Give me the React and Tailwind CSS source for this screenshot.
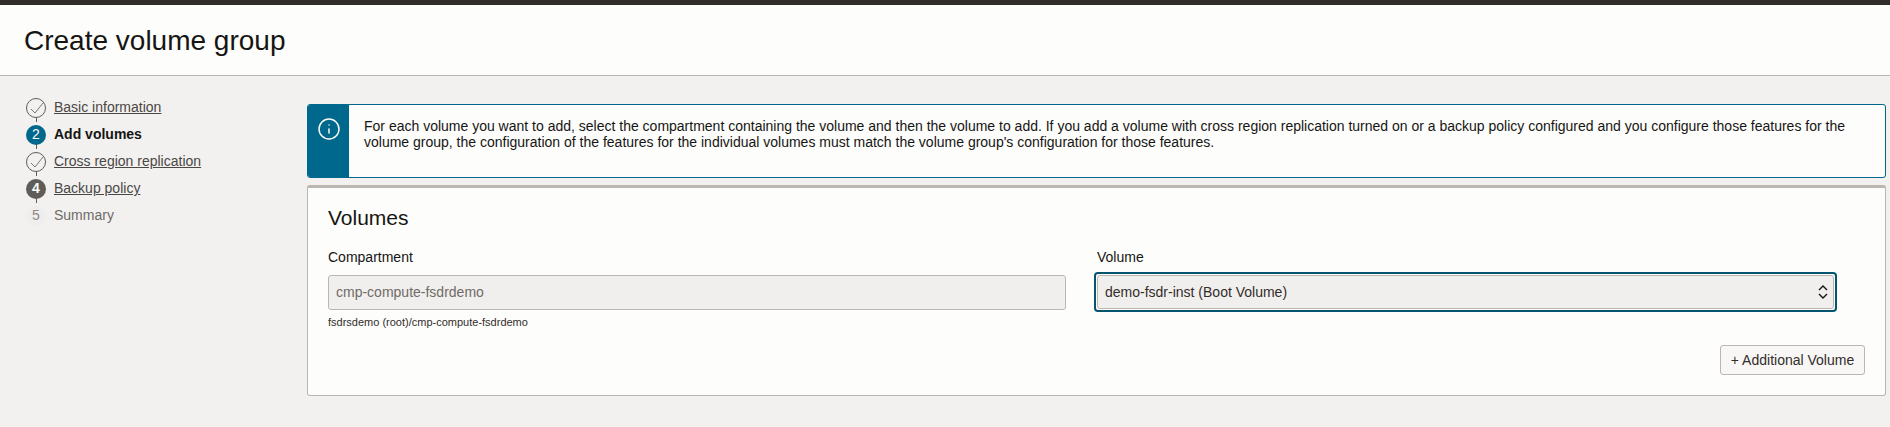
import { Info } from "lucide-react";

const steps = [
  { label: "Basic information", state: "done" },
  { label: "Add volumes", state: "current", num: 2 },
  { label: "Cross region replication", state: "done" },
  { label: "Backup policy", state: "visited", num: 4 },
  { label: "Summary", state: "todo", num: 5 },
];

function StepIcon({ step }) {
  if (step.state === "done") {
    return (
      <span className="w-5 h-5 rounded-full border border-[#5f5c59] bg-[#f2f1f0] flex items-center justify-center z-10">
        <svg viewBox="1 1 18 18" className="w-[18px] h-[18px]" fill="none" stroke="#7a7673" strokeWidth="1">
          <path d="M5 11 L9 15 L17 5" />
        </svg>
      </span>
    );
  }
  if (step.state === "current") {
    return <span className="w-5 h-5 rounded-full bg-[#00688c] text-[#fcfbfa] text-[14px] flex items-center justify-center z-10">{step.num}</span>;
  }
  if (step.state === "visited") {
    return <span className="w-5 h-5 rounded-full bg-[#5f5c59] text-[#fcfbfa] text-[14px] font-bold flex items-center justify-center z-10">{step.num}</span>;
  }
  return <span className="w-5 h-5 rounded-full bg-[#efeeec] text-[#8d8985] text-[14px] flex items-center justify-center z-10">{step.num}</span>;
}

function Stepper() {
  return (
    <ul className="w-[307px] shrink-0 pl-[26px] pt-[18px]">
      {steps.map((step, i) => (
        <li key={step.label} className="relative h-[27px] flex items-center gap-2 text-[14px]">
          {i < steps.length - 1 && <span className="absolute left-[9.5px] top-[20px] w-px h-[8px] bg-[#5f5c59]" />}
          <StepIcon step={step} />
          {step.state === "current" && <span className="font-bold text-[#161513]">{step.label}</span>}
          {step.state === "todo" && <span className="text-[#6f6b67]">{step.label}</span>}
          {(step.state === "done" || step.state === "visited") && (
            <a href="#" className="underline text-[#4a4744]">{step.label}</a>
          )}
        </li>
      ))}
    </ul>
  );
}

export default function App() {
  return (
    <div className="w-[1890px] h-[427px] overflow-hidden bg-[#f2f1f0] text-[#161513] font-['Liberation_Sans',Arial,sans-serif]">
      <div className="h-[5px] bg-[#312d2a]" />
      <header className="h-[71px] bg-[#fdfdfb] border-b border-[#bcb6b1] pl-[24px] flex items-center">
        <h1 className="text-[28px] leading-none pt-[2px]">Create volume group</h1>
      </header>
      <div className="flex">
        <Stepper />
        <main className="w-[1579px] pt-[28px]">
          <div className="h-[74px] flex rounded-[3px] border border-[#00688c] bg-[#fdfdfb] overflow-hidden">
            <div className="w-[41px] bg-[#00688c] flex justify-center pt-[12px]">
              <Info className="w-[24px] h-[24px] text-[#fcfbfa]" strokeWidth={1.5} />
            </div>
            <p className="flex-1 pl-[15px] pr-[40px] pt-[13px] text-[14px] leading-[16px] text-[#161513]">
              For each volume you want to add, select the compartment containing the volume and then the volume to add. If you add a volume with cross region replication turned on or a backup policy configured and you configure those features for the volume group, the configuration of the features for the individual volumes must match the volume group's configuration for those features.
            </p>
          </div>
          <section className="mt-[7px] h-[211px] rounded-[3px] border border-[#bcb6b1] border-t-[3px] bg-[#fdfdfb] px-[20px] pt-[18px]">
            <h2 className="text-[21px] leading-[24px]">Volumes</h2>
            <div className="flex mt-[19px]">
              <div className="w-[738px]">
                <label className="block text-[14px] leading-[16px]">Compartment</label>
                <div className="mt-[10px] h-[35px] rounded-[3px] border border-[#bcb6b1] bg-[#f1efed] px-[7px] flex items-center text-[14px] text-[#6f6b67]">
                  cmp-compute-fsdrdemo
                </div>
                <p className="mt-[6px] text-[11px] leading-[12px] text-[#312d2a]">fsdrsdemo (root)/cmp-compute-fsdrdemo</p>
              </div>
              <div className="ml-[31px] w-[740px]">
                <label className="block text-[14px] leading-[16px]">Volume</label>
                <div className="mt-[7px] -ml-[3px] h-[40px] rounded-[4px] border-2 border-[#04536f] p-px">
                  <div className="h-full rounded-[3px] border border-[#bcb6b1] bg-[#f1efed] pl-[7px] pr-[5px] flex items-center justify-between text-[14px] text-[#312d2a]">
                    <span>demo-fsdr-inst (Boot Volume)</span>
                    <svg viewBox="0 0 10 16" className="w-[10px] h-[16px]" fill="none" stroke="#161513" strokeWidth="1.4">
                      <path d="M1 6 L5 2 L9 6" />
                      <path d="M1 10 L5 14 L9 10" />
                    </svg>
                  </div>
                </div>
              </div>
            </div>
            <div className="flex justify-end mt-[17px]">
              <button className="h-[30px] w-[145px] rounded-[3px] border border-[#bcb6b1] bg-[#f8f7f6] text-[14px] text-[#312d2a]">
                + Additional Volume
              </button>
            </div>
          </section>
        </main>
      </div>
    </div>
  );
}
